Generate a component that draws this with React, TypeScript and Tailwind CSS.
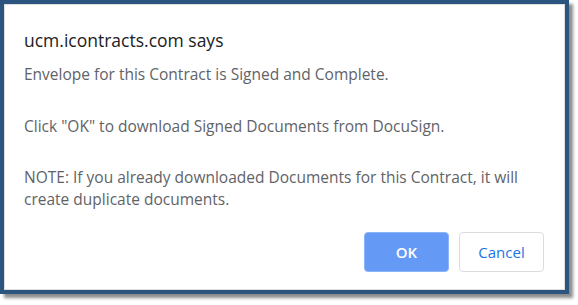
import React from "react";

export default function App() {
  return (
    <div className="w-[578px] h-[305px] bg-white" style={{ fontFamily: '"Open Sans", "Noto Sans", sans-serif' }}>
      <div className="w-[569px] h-[294px] border-4 border-[#2b547e] shadow-[4px_4px_3px_rgba(0,0,0,0.45)]">
        <div className="h-full border border-[#dedede] bg-white flex flex-col pl-[19px] pr-[20px]">
          <div className="pt-[22px] text-[17.5px] leading-[26px] text-[#202124]">ucm.icontracts.com says</div>
          <div className="mt-[10px] text-[15.5px] leading-[22px] text-[#5f6368]">
            <p>Envelope for this Contract is Signed and Complete.</p>
            <p className="mt-[30px]">Click "OK" to download Signed Documents from DocuSign.</p>
            <p className="mt-[29px]">NOTE: If you already downloaded Documents for this Contract, it will create duplicate documents.</p>
          </div>
          <div className="mt-auto mb-[17px] flex justify-end gap-[10px]">
            <button className="w-[85px] h-[40px] rounded-[4px] bg-[#6599f6] border border-[#8ab4f8] text-white text-[15px] font-semibold">OK</button>
            <button className="w-[85px] h-[40px] rounded-[4px] bg-white border border-[#dadce0] text-[#1a73e8] text-[15px]">Cancel</button>
          </div>
        </div>
      </div>
    </div>
  );
}
